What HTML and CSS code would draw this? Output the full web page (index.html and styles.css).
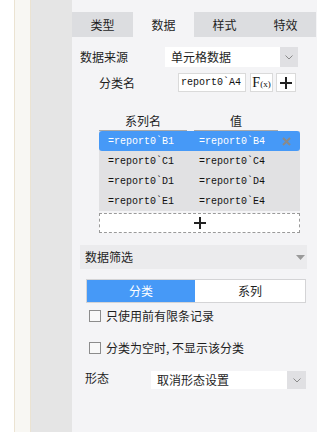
FILE: index.html
```html
<!DOCTYPE html>
<html lang="zh">
<head>
<meta charset="utf-8">
<link rel="stylesheet" href="styles.css">
</head>
<body>
<div class="app">
  <div class="strip-white"></div>
  <div class="strip-cream"></div>
  <div class="strip-gray"></div>
  <div class="panel">
    <div class="tabs">
      <div class="tab">类型</div>
      <div class="tab active">数据</div>
      <div class="tab">样式</div>
      <div class="tab">特效</div>
    </div>

    <div class="row-source">
      <div class="lbl-source">数据来源</div>
      <div class="select select-source">
        <div class="select-text">单元格数据</div>
        <div class="select-arrow"><svg width="8" height="5" viewBox="0 0 8 5"><path d="M0.5 0.5 L4 4 L7.5 0.5" fill="none" stroke="#8a8a8a" stroke-width="1"/></svg></div>
      </div>
    </div>

    <div class="row-cat">
      <div class="lbl-cat">分类名</div>
      <div class="input-cat">report0`A4</div>
      <div class="btn-fx"><span class="fx-f">F</span><span class="fx-x">(x)</span></div>
      <div class="btn-plus"><svg width="12" height="12" viewBox="0 0 12 12"><path d="M6 0 V12 M0 6 H12" stroke="#222" stroke-width="2"/></svg></div>
    </div>

    <div class="table">
      <div class="thead">
        <div class="th th1">系列名</div>
        <div class="th th2">值</div>
      </div>
      <div class="tlist">
        <div class="trow selected">
          <div class="c1">=report0`B1</div>
          <div class="c2">=report0`B4</div>
          <div class="close"><svg width="9" height="9" viewBox="0 0 9 9"><path d="M1 1 L8 8 M8 1 L1 8" stroke="#8a8a8a" stroke-width="2"/></svg></div>
        </div>
        <div class="trow">
          <div class="c1">=report0`C1</div>
          <div class="c2">=report0`C4</div>
        </div>
        <div class="trow">
          <div class="c1">=report0`D1</div>
          <div class="c2">=report0`D4</div>
        </div>
        <div class="trow">
          <div class="c1">=report0`E1</div>
          <div class="c2">=report0`E4</div>
        </div>
      </div>
      <div class="add-row"><svg width="12" height="12" viewBox="0 0 12 12"><path d="M6 0 V12 M0 6 H12" stroke="#222" stroke-width="2"/></svg></div>
    </div>

    <div class="section-head">
      <span>数据筛选</span>
      <svg class="tri" width="9" height="5" viewBox="0 0 9 5"><path d="M0 0 H9 L4.5 5 Z" fill="#9a9a9a"/></svg>
    </div>

    <div class="segment">
      <div class="seg on">分类</div>
      <div class="seg">系列</div>
    </div>

    <div class="check-row first">
      <div class="box"></div>
      <div class="check-lbl">只使用前有限条记录</div>
    </div>
    <div class="check-row second">
      <div class="box"></div>
      <div class="check-lbl">分类为空时, 不显示该分类</div>
    </div>

    <div class="row-shape">
      <div class="lbl-shape">形态</div>
      <div class="select select-shape">
        <div class="select-text">取消形态设置</div>
        <div class="select-arrow"><svg width="8" height="5" viewBox="0 0 8 5"><path d="M0.5 0.5 L4 4 L7.5 0.5" fill="none" stroke="#8a8a8a" stroke-width="1"/></svg></div>
      </div>
    </div>
  </div>
</div>
</body>
</html>
```

FILE: styles.css
```css
* { box-sizing: border-box; }
html, body {
  margin: 0;
  padding: 0;
  width: 317px;
  height: 432px;
  overflow: hidden;
  background: #fff;
}
body {
  font-family: "Noto Sans CJK SC", "Noto Sans", sans-serif;
  font-size: 12px;
  color: #1e1e1e;
}
.app {
  display: flex;
  height: 432px;
}
.strip-white {
  width: 14px;
  background: #fff;
}
.strip-cream {
  width: 17px;
  background: #f8f7f3;
  border-left: 1px solid #ebe3d2;
  border-right: 1px solid #ebe3d2;
}
.strip-gray {
  width: 41px;
  background: #e5e5e5;
}
.panel {
  flex: 1;
  background: #f4f4f6;
  padding-top: 12px;
}
.tabs {
  display: flex;
  width: 244px;
  height: 25px;
}
.tab {
  width: 61px;
  display: flex;
  align-items: center;
  justify-content: center;
  background: #dcdde0;
  line-height: 1;
}
.tab.active {
  background: #f4f4f6;
}

.row-source {
  display: flex;
  align-items: center;
  margin-top: 10px;
  padding-left: 8px;
  height: 20px;
}
.lbl-source {
  width: 85px;
  line-height: 1;
}
.select {
  display: flex;
  background: #fff;
}
.select-source {
  width: 133px;
  height: 20px;
}
.select-text {
  flex: 1;
  display: flex;
  align-items: center;
  padding-left: 6px;
  line-height: 1;
}
.select-arrow {
  width: 18px;
  background: #e0e0e3;
  display: flex;
  align-items: center;
  justify-content: center;
}

.row-cat {
  display: flex;
  align-items: center;
  margin-top: 6px;
  padding-left: 27px;
  height: 19px;
}
.lbl-cat {
  width: 79px;
  line-height: 1;
}
.input-cat {
  width: 68px;
  height: 19px;
  background: #fff;
  border: 1px solid #dadada;
  font-family: "Liberation Mono", monospace;
  font-size: 10px;
  display: flex;
  align-items: center;
  padding-left: 2px;
  color: #111;
}
.btn-fx {
  margin-left: 4px;
  width: 23px;
  height: 19px;
  background: #fff;
  border: 1px solid #dadada;
  display: flex;
  align-items: center;
  justify-content: center;
  font-family: "Liberation Serif", serif;
  color: #111;
}
.fx-f { font-size: 14px; line-height: 1; }
.fx-x { font-size: 9px; line-height: 1; margin-top: 3px; }
.btn-plus {
  margin-left: 3px;
  width: 20px;
  height: 19px;
  background: #fff;
  border: 1px solid #dadada;
  display: flex;
  align-items: center;
  justify-content: center;
}

.table {
  margin-top: 21px;
  margin-left: 27px;
  width: 201px;
}
.thead {
  display: flex;
  height: 18px;
}
.th {
  display: flex;
  align-items: center;
  justify-content: center;
  border-bottom: 1px solid #a8a8a8;
  line-height: 1;
  padding-bottom: 1px;
}
.th1 { width: 88px; }
.th2 { width: 84px; margin-left: 7px; }
.tlist {
  background: #e1e1e3;
}
.trow {
  display: flex;
  align-items: center;
  height: 20px;
  padding-left: 9px;
  font-family: "Liberation Mono", monospace;
  font-size: 10px;
  color: #111;
}
.trow.selected {
  background: #4699f7;
  border-radius: 3px;
  color: #fff;
}
.c1 { width: 91px; }
.c2 { flex: 1; }
.close {
  width: 20px;
  display: flex;
  align-items: center;
  justify-content: center;
  margin-right: 4px;
}
.add-row {
  margin-top: 2px;
  height: 20px;
  background: #fff;
  border: 1px dashed #9a9a9a;
  display: flex;
  align-items: center;
  justify-content: center;
}

.section-head {
  margin-top: 12px;
  margin-left: 8px;
  width: 227px;
  height: 24px;
  background: #ebebed;
  display: flex;
  align-items: center;
  justify-content: space-between;
  padding-left: 5px;
  padding-right: 2px;
  line-height: 1;
}
.segment {
  margin-top: 10px;
  margin-left: 14px;
  width: 220px;
  height: 24px;
  display: flex;
  border: 1px solid #d4d4d6;
  background: #fff;
}
.seg {
  flex: 1;
  display: flex;
  align-items: center;
  justify-content: center;
  line-height: 1;
}
.seg.on {
  flex: 0 0 108px;
  background: #4699f7;
  color: #fff;
}
.check-row {
  display: flex;
  align-items: center;
  height: 14px;
  padding-left: 17px;
}
.check-row.first { margin-top: 6px; }
.check-row.second { margin-top: 18px; }
.box {
  width: 12px;
  height: 12px;
  border: 1px solid #8c8c8c;
  background: #f8f8f8;
}
.check-lbl {
  margin-left: 5px;
  line-height: 1;
}
.row-shape {
  display: flex;
  align-items: center;
  margin-top: 16px;
  padding-left: 13px;
  height: 18px;
}
.lbl-shape {
  width: 66px;
  line-height: 1;
  margin-top: -4px;
}
.select-shape {
  width: 155px;
  height: 18px;
}
.select-shape .select-arrow {
  width: 19px;
}
```
